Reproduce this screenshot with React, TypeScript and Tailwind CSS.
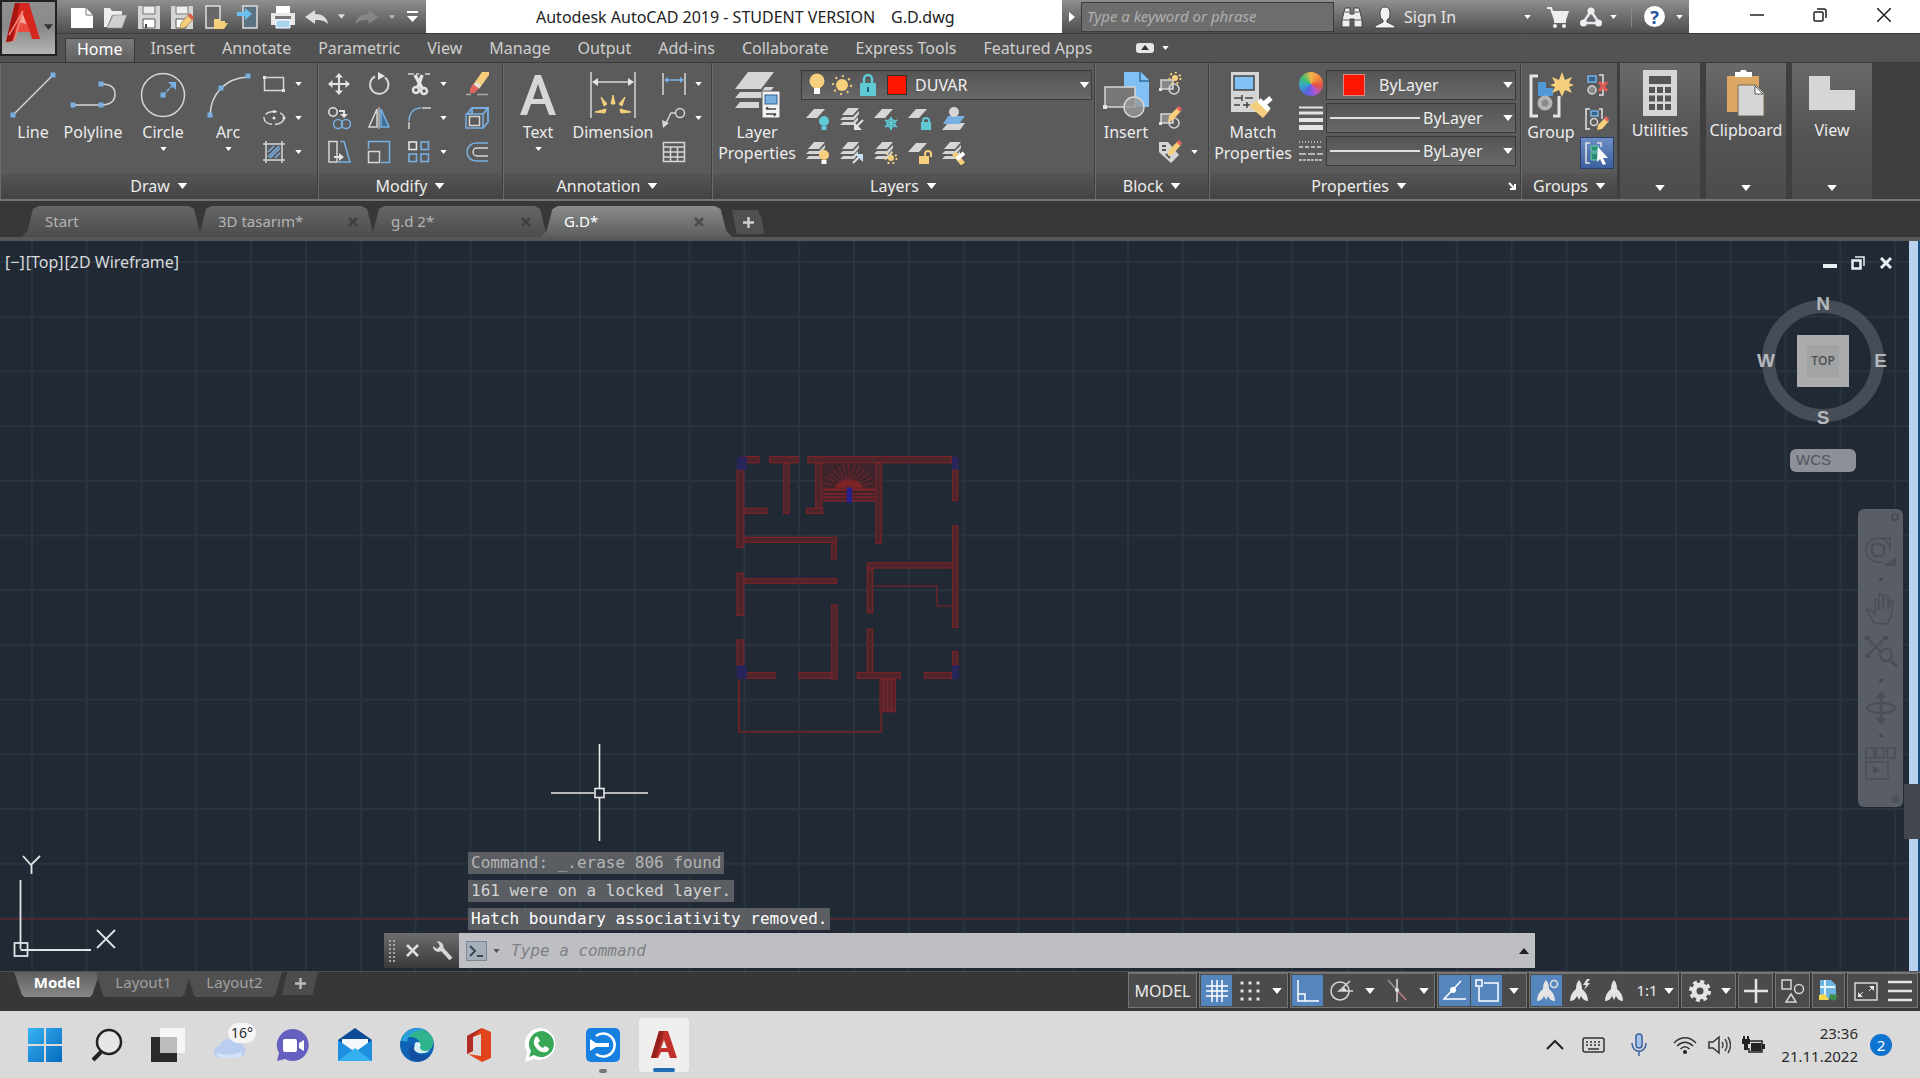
import React from "react";
import type { ReactNode } from "react";

const W = "#e4e4e4";
const B = "#78b0e2";
const G = "#d6d6d6";
const Y = "#f5cf7c";
const T = "#5fc9d6";
const N = "#4a4e55";

function Ic({ w = 24, h = 24, vb, children }: { w?: number; h?: number; vb?: string; children: ReactNode }) {
  return (
    <svg width={w} height={h} viewBox={vb ?? `0 0 ${w} ${h}`} fill="none" className="shrink-0" aria-hidden="true">
      {children}
    </svg>
  );
}

function Tri({ w = 8, h = 5, c = "#fff" }: { w?: number; h?: number; c?: string }) {
  return (
    <Ic w={w} h={h} vb="0 0 8 5">
      <path d="M0 0h8l-4 5z" fill={c} />
    </Ic>
  );
}

/* ---------- ribbon building blocks ---------- */

function Big({ icon, label, arrow, width }: { icon: ReactNode; label: string[]; arrow?: boolean; width: string }) {
  return (
    <button className={`flex ${width} shrink-0 flex-col items-center pt-2`}>
      <span className="mb-[3px] flex h-12 items-center justify-center">{icon}</span>
      {label.map((l) => (
        <span key={l} className="text-base leading-[21px] whitespace-nowrap">
          {l}
        </span>
      ))}
      {arrow && (
        <span className="mt-1">
          <Tri w={7} h={4} />
        </span>
      )}
    </button>
  );
}

function Small({ icon, name, arrow, wide }: { icon: ReactNode; name: string; arrow?: boolean; wide?: boolean }) {
  return (
    <span className={`flex h-[34px] items-center ${wide ? "w-[58px]" : ""}`}>
      <button aria-label={name} className="flex h-8 w-10 items-center justify-center">
        {icon}
      </button>
      {arrow && (
        <button aria-label={`${name} options`} className="flex h-8 w-2 items-center justify-center">
          <Tri w={7} h={4} />
        </button>
      )}
    </span>
  );
}

function Panel({ title, width, children, launcher }: { title: string; width: string; children: ReactNode; launcher?: boolean }) {
  return (
    <section className={`flex ${width} shrink-0 flex-col border-r border-l border-r-[#3f3f3f] border-l-[#6b6b6b] bg-[#5b5b5b]`}>
      <div className="flex h-[110px] items-start">{children}</div>
      <div className="flex flex-1 items-center justify-center bg-linear-to-b from-[#565656] to-[#434343]">
        <button className="ml-auto flex items-center gap-[7px] text-base leading-5">
          {title}
          <Tri w={11} h={6} />
        </button>
        <span className="ml-auto">
          {launcher && (
            <button aria-label="Properties dialog" className="mr-1 block">
              <Ic w={8} h={8}>
                <path d="M1 1l5 5M7 2v5H2" stroke="#fff" strokeWidth="2" />
              </Ic>
            </button>
          )}
        </span>
      </div>
    </section>
  );
}

function Closed({ icon, label }: { icon: ReactNode; label: string }) {
  return (
    <button className="mr-[6px] flex w-20 shrink-0 flex-col items-center bg-linear-to-b from-[#6a6a6a] via-[#555] to-[#4c4c4c] pt-[6px] text-base leading-[21px]">
      <span className="flex h-12 items-center">{icon}</span>
      <span className="mt-[3px]">{label}</span>
      <span className="mt-auto mb-2">
        <Tri w={10} h={6} />
      </span>
    </button>
  );
}

/* ---------- draw icons ---------- */

const Dot = ({ x, y }: { x: number; y: number }) => <rect x={x - 2.5} y={y - 2.5} width="5" height="5" fill={B} />;

const LineIcon = (
  <Ic w={46} h={46}>
    <path d="M3 43L43 3" stroke={G} strokeWidth="1.5" />
    <Dot x={3} y={43} />
    <Dot x={43} y={3} />
  </Ic>
);
const PolylineIcon = (
  <Ic w={46} h={46}>
    <path d="M3 33h28c9 0 14-4 14-11S40 12 31 12" stroke={G} strokeWidth="1.5" />
    <Dot x={3} y={33} />
    <Dot x={31} y={33} />
    <Dot x={31} y={12} />
  </Ic>
);
const CircleIcon = (
  <Ic w={46} h={46}>
    <circle cx="23" cy="23" r="21.5" stroke={G} strokeWidth="1.5" />
    <path d="M23 23l10-10" stroke={B} strokeWidth="1.5" strokeDasharray="4 1" />
    <path d="M28 10h8v8z" fill={B} />
    <Dot x={23} y={23} />
  </Ic>
);
const ArcIcon = (
  <Ic w={46} h={46}>
    <path d="M5 43C6 22 20 6 43 5" stroke={G} strokeWidth="1.5" />
    <Dot x={5} y={43} />
    <Dot x={16} y={16} />
    <Dot x={43} y={4} />
  </Ic>
);
const RectIcon = (
  <Ic>
    <rect x="2.5" y="5.5" width="19" height="13" stroke={G} strokeWidth="1.5" />
    <path d="M1 4h3v3H1zM20 17h3v3h-3z" fill={W} />
  </Ic>
);
const EllipseIcon = (
  <Ic>
    <ellipse cx="12" cy="12" rx="10" ry="6.5" stroke={G} strokeWidth="1.5" strokeDasharray="12 3" />
    <circle cx="12" cy="12" r="1.5" fill={W} />
    <circle cx="22" cy="12" r="1.5" fill={W} />
    <circle cx="12" cy="5.5" r="1.5" fill={W} />
  </Ic>
);
const HatchIcon = (
  <Ic>
    <path d="M4 1v22M20 1v22M1 4h22M1 20h22" stroke={G} strokeWidth="1.5" />
    <path d="M6 12l6-6M6 17L17 6M8 18l10-10M13 18l5-5" stroke={B} strokeWidth="1.5" />
  </Ic>
);

/* ---------- modify icons ---------- */

const MoveIcon = (
  <Ic>
    <path d="M12 1l4 4.500h-3V11h5.500V8L23 12l-4.500 4v-3H13v5.500h3L12 23l-4-4.500h3V13H5.500v3L1 12l4.500-4v3H11V5.500H8z" fill={W} />
  </Ic>
);
const RotateIcon = (
  <Ic>
    <path d="M8 4.500A9.200 9.200 0 1 0 18 5.500" stroke={G} strokeWidth="2" />
    <path d="M11 0l7 4-7 4z" fill={W} />
  </Ic>
);
const TrimIcon = (
  <Ic>
    <path d="M1 2h6M9 2h3M18 2h5" stroke={G} strokeWidth="1.5" />
    <path d="M8 3l7 13M15 3l-4 12" stroke={W} strokeWidth="3.5" />
    <circle cx="9" cy="18" r="3" stroke={W} strokeWidth="2.5" />
    <circle cx="17" cy="19" r="3" stroke={W} strokeWidth="2.5" />
  </Ic>
);
const EraseIcon = (
  <Ic>
    <path d="M1 22.500h5M12 22.500h11" stroke="#aaa" strokeWidth="1.5" />
    <path d="M17 0h7v3L14 17l-6-4z" fill={Y} />
    <path d="M11 10l5 3-2 3-5-3z" fill={W} />
    <path d="M8 12l6 4.500L9 21H5v-4z" fill="#e26660" />
  </Ic>
);
const CopyIcon = (
  <Ic>
    <circle cx="6" cy="6" r="4.2" stroke={W} strokeWidth="1.5" />
    <path d="M12 5h5v4" stroke={W} strokeWidth="2" />
    <path d="M13 8h8l-4 4z" fill={W} />
    <circle cx="11" cy="18" r="4.5" stroke={B} strokeWidth="1.5" />
    <circle cx="19" cy="18" r="4.5" stroke={B} strokeWidth="1.5" />
  </Ic>
);
const MirrorIcon = (
  <Ic>
    <path d="M10 3v18H2z" stroke={G} strokeWidth="1.5" />
    <path d="M14 3v18h8z" fill="#3f6f9b" stroke={B} strokeWidth="1.5" />
    <path d="M12 1v22" stroke={W} />
  </Ic>
);
const FilletIcon = (
  <Ic>
    <path d="M2 23v-7" stroke={G} strokeWidth="1.5" />
    <path d="M2 15C2 7 7 2 14 2" stroke={B} strokeWidth="1.5" />
    <path d="M15 2h9" stroke={G} strokeWidth="1.5" />
  </Ic>
);
const ExplodeIcon = (
  <Ic>
    <path d="M2 8l5-6h16l-5 6M23 2v14l-5 6M7 2v6M3 8h3" stroke={B} strokeWidth="1.8" />
    <path d="M1 8h17v14H1z" stroke={B} strokeWidth="1.5" />
    <rect x="4.500" y="10.500" width="10" height="9" stroke={G} strokeWidth="1.5" />
  </Ic>
);
const StretchIcon = (
  <Ic>
    <path d="M2 1.500h8V22H2z" stroke={G} strokeWidth="1.5" />
    <path d="M13 1.500h4L23 22H11" stroke={B} strokeWidth="1.5" />
    <path d="M7 17h6" stroke={W} strokeWidth="2" />
    <path d="M12 13l5 4-5 4z" fill={W} />
  </Ic>
);
const ScaleIcon = (
  <Ic>
    <path d="M1.500 9V1.500h21v21H14" stroke={B} strokeWidth="1.5" />
    <rect x="1.500" y="11.500" width="11" height="11" stroke={G} strokeWidth="1.5" />
  </Ic>
);
const ArrayIcon = (
  <Ic>
    <rect x="2" y="2" width="7.500" height="7.500" stroke={W} strokeWidth="1.6" />
    <rect x="14" y="2" width="7.500" height="7.500" stroke={B} strokeWidth="1.6" />
    <rect x="2" y="14" width="7.500" height="7.500" stroke={B} strokeWidth="1.6" />
    <rect x="14" y="14" width="7.500" height="7.500" stroke={B} strokeWidth="1.6" />
  </Ic>
);
const OffsetIcon = (
  <Ic>
    <path d="M23 3H11a9 9 0 0 0 0 18h12" stroke={B} strokeWidth="1.5" />
    <path d="M23 8H12a4 4 0 0 0 0 8h11" stroke={G} strokeWidth="1.5" />
  </Ic>
);

/* ---------- annotation icons ---------- */

const TextIcon = (
  <Ic w={38} h={44}>
    <path d="M1 42L16 2h6l15 40h-7l-4-11H12L8 42zM14 26h10L19 11z" fill={G} />
  </Ic>
);
const DimensionIcon = (
  <Ic w={46} h={46}>
    <path d="M1 0v46M45 0v46M3 10h40" stroke={G} strokeWidth="1.5" />
    <path d="M2 10l6-4v8zM44 10l-6-4v8z" fill={W} />
    <path d="M21 32l2-9 2 9zM14 34l-3-9 6 7zM32 34l3-9-6 7zM16 37L5 40l10 1zM30 37l11 3-10 1z" fill={Y} stroke={Y} />
  </Ic>
);
const LinearIcon = (
  <Ic>
    <path d="M1 1v22M23 1v22" stroke={G} strokeWidth="1.5" />
    <path d="M3 8h18" stroke={B} strokeWidth="1.5" />
    <path d="M2 8l4-3v6zM22 8l-4-3v6z" fill={B} />
  </Ic>
);
const LeaderIcon = (
  <Ic>
    <circle cx="18" cy="7" r="4.5" stroke={G} strokeWidth="1.5" />
    <path d="M13 7H9L3 19" stroke={G} strokeWidth="1.5" />
    <path d="M0 14l7 3-6 5z" fill={G} />
  </Ic>
);
const TableIcon = (
  <Ic>
    <path d="M1.500 2.500h21v19h-21zM1.500 7h21M1.500 12h21M1.500 17h21M8.500 7v14M15.500 7v14" stroke={G} strokeWidth="1.5" />
  </Ic>
);

/* ---------- layer icons ---------- */

const LayerPropsIcon = (
  <Ic w={46} h={46}>
    <path d="M14 0h26L27 17H1z" fill={G} />
    <path d="M6 20h21l4-5h9l-9 11H1zM6 30h19v6H1z" fill={G} />
    <rect x="28" y="19" width="18" height="27" fill="#f3f3f3" stroke="#555" />
    <rect x="31" y="23" width="12" height="9" fill={B} stroke="#315e8c" />
    <path d="M32 37h10M32 37l2-2M42 42H32M42 42l-2 2" stroke="#444" strokeWidth="1.5" />
  </Ic>
);
const Sheet = <path d="M8 2h11l-8 9H0z" fill={G} />;
const Sheets = (
  <g fill={G}>
    <path d="M8 1h11l-6 7H2z" />
    <path d="M3 10h10l6-6v3l-5 6H0zM3 15h10l5-5v3l-4 5H0z" />
  </g>
);
const Bulb = ({ c }: { c: string }) => (
  <g>
    <circle cx="18" cy="14" r="5" fill={c} />
    <path d="M15.500 19h5v4h-5z" fill={c === Y ? "#fff" : c} />
  </g>
);
const Sun = ({ x, y, r }: { x: number; y: number; r: number }) => (
  <g>
    <circle cx={x} cy={y} r={r} fill={Y} />
    <circle cx={x} cy={y} r={r + 2.5} stroke={Y} strokeWidth="2" strokeDasharray="2 3" />
  </g>
);
const layerIcons: [string, ReactNode][] = [
  ["Layer off", <Ic>{Sheet}<Bulb c={T} /></Ic>],
  ["Isolate", <Ic>{Sheets}<path d="M23 13l-6 6" stroke={W} strokeWidth="2" /><path d="M14 15v8h8z" fill={W} /></Ic>],
  ["Freeze", <Ic>{Sheet}<path d="M17 10v13M11 13l12 7M23 13l-12 7" stroke={T} strokeWidth="2" /><circle cx="17" cy="16.500" r="4" stroke={T} strokeWidth="1.5" /></Ic>],
  ["Lock", <Ic>{Sheet}<path d="M15 16v-2a3 3 0 0 1 6 0v2" stroke={T} strokeWidth="2" /><path d="M13 15h10v8H13z" fill={T} /></Ic>],
  ["Make current", <Ic><path d="M6 16h17l-5 7H0z" fill={G} /><path d="M6 9h17l-6 8H1z" fill={B} /><circle cx="12" cy="5" r="5" fill={G} /></Ic>],
  ["Turn all layers on", <Ic>{Sheets}<Bulb c={Y} /></Ic>],
  ["Unisolate", <Ic>{Sheets}<path d="M13 22l7-7" stroke={W} strokeWidth="2" /><path d="M15 13h8v8z" fill="#c9e2f8" /></Ic>],
  ["Thaw all", <Ic>{Sheets}<Sun x={17} y={17} r={3} /></Ic>],
  ["Unlock", <Ic>{Sheet}<path d="M17 15v-2a3 3 0 0 1 6 0v3" stroke={Y} strokeWidth="2" /><path d="M11 15h10v8H11z" fill={Y} /></Ic>],
  ["Match layer", <Ic>{Sheets}<path d="M12 12l9 11" stroke={Y} strokeWidth="5" /><path d="M15 18l7-6" stroke="#fff" strokeWidth="4" /></Ic>],
];

/* ---------- block, properties and group icons ---------- */

const InsertIcon = (
  <Ic w={46} h={46}>
    <path d="M21 0h17l8 8v27H21z" fill="#80c0f4" />
    <path d="M37 0v9h9" stroke="#356998" strokeWidth="1.5" />
    <rect x="2" y="15" width="30" height="20" fill="#777" stroke={G} strokeWidth="1.5" />
    <circle cx="31" cy="35" r="10" fill="#999" fillOpacity=".8" stroke={G} strokeWidth="1.5" />
    <path d="M0 33h4v4H0z" fill={W} />
  </Ic>
);
const blockBase = (
  <g>
    <rect x="3" y="8" width="12" height="9" fill="#888" stroke={G} strokeWidth="1.5" />
    <circle cx="16" cy="17" r="5" stroke={G} strokeWidth="1.5" />
    <path d="M1 16h3v3H1z" fill={W} />
  </g>
);
const Pencil = (
  <g>
    <path d="M19 2l4 3-8 9-5 2 1-6z" fill={Y} />
    <path d="M18 2l3-2 3 3-2 3z" fill="#e26660" />
  </g>
);
const CreateBlockIcon = <Ic>{blockBase}<Sun x={17} y={6} r={3} /></Ic>;
const EditBlockIcon = <Ic>{blockBase}{Pencil}</Ic>;
const AttrIcon = (
  <Ic>
    <path d="M1 2h9l11 13-8 8L1 12z" fill={G} />
    <path d="M4 6h4M4 10h4M8 14l4 4" stroke="#555" strokeWidth="2" />
    {Pencil}
  </Ic>
);
const MatchIcon = (
  <Ic w={46} h={46}>
    <rect x="1" y="0" width="28" height="40" fill={G} />
    <rect x="4" y="4" width="20" height="14" fill="#80c0f4" stroke="#444" strokeWidth="1.5" />
    <path d="M4 26h8M15 26h8M12 23v6M4 33h6M13 33h7M17 30v6" stroke="#444" strokeWidth="1.5" />
    <path d="M19 34l11-7 10 11-7 8z" fill={Y} />
    <path d="M29 28l10 10M34 32l7-6" stroke="#fff" strokeWidth="5" />
  </Ic>
);
const GroupIcon = (
  <Ic w={46} h={46}>
    <path d="M10 4H3v40h7M25 44h6V24" stroke={W} strokeWidth="3" />
    <path d="M10 10h8v6h7v8H10z" fill="#4f9ad6" />
    <circle cx="17" cy="31" r="7.5" fill="#b4b4b4" />
    <circle cx="17" cy="31" r="3.5" fill="#8a8a8a" />
    <path d="M34 0l3 8 7-3-3 6 5 2-5 2 3 6-7-3-3 7-3-7-7 3 3-6-5-2 5-2-3-6 7 3z" fill={Y} />
  </Ic>
);
const UngroupIcon = (
  <Ic>
    <rect x="3" y="3" width="8" height="6" fill="#36658c" stroke={B} strokeWidth="1.5" />
    <circle cx="7" cy="17" r="4" fill="#888" stroke={G} strokeWidth="1.5" />
    <path d="M14 2h4v20h-4" stroke={W} strokeWidth="1.5" />
    <path d="M14 9l8 9M22 9l-8 9" stroke="#e25a52" strokeWidth="3" />
  </Ic>
);
const GroupEditIcon = (
  <Ic>
    <path d="M5 2H1v20h4M14 2h3v10" stroke={W} strokeWidth="1.5" />
    <rect x="6" y="4" width="7" height="5" fill="#36658c" stroke={B} strokeWidth="1.5" />
    <circle cx="9" cy="15" r="3.5" stroke={G} strokeWidth="1.5" />
    <path d="M20 11l4 3-7 8-5 1 1-5z" fill={Y} />
    <path d="M19 11l2-2 3 3-2 3z" fill="#e26660" />
  </Ic>
);
const GroupSelIcon = (
  <Ic>
    <path d="M5 2H1v20h4M12 2h4v4" stroke={W} strokeWidth="1.5" />
    <path d="M6 5h7v5H6zM6 12h7v7H6z" fill="#2d8a76" stroke="#6fd0a4" />
    <path d="M13 6l10 11h-5l3 6-3 1-3-6-3 3z" fill="#fff" />
  </Ic>
);

const CalcIcon = (
  <Ic w={34} h={46}>
    <rect width="34" height="46" fill={G} />
    <rect x="6" y="6" width="22" height="8" fill="#555" />
    {[17, 25.5, 34].map((y) => [6, 14, 22].map((x) => <rect key={`${x}-${y}`} x={x} y={y} width="6" height="6" fill="#555" />))}
  </Ic>
);
const ClipIcon = (
  <Ic w={38} h={46}>
    <path d="M0 6h32v36H0z" fill="#dda865" />
    <path d="M8 2h5l2-3h3l2 3h5v5H8z" fill="#fff" />
    <path d="M11 15h18l8 8v23H11z" fill={G} stroke="#7b6b52" />
    <path d="M28 16v8h8z" fill="#fff" stroke="#555" />
  </Ic>
);
const ViewIcon = (
  <Ic w={46} h={46}>
    <path d="M0 6h21v14h25v20H0z" fill={G} />
  </Ic>
);

/* ---------- title bar icons ---------- */

const qat: [string, ReactNode][] = [
  ["New", <Ic><path d="M1 3h15l7 7v13H1z" fill="#fff" /><path d="M16 3v7h7" stroke="#777" /></Ic>],
  ["Open", <Ic><path d="M1 22V3h6l2 3h10v4H9L4 22z" fill="#eee" /><path d="M10 10h14l-5 13H4z" fill="#cfcfcf" stroke="#888" strokeWidth=".6" /></Ic>],
  ["Save", <Ic><path d="M1 1h22v23H1z" fill="#d5d5d5" /><path d="M6 1h12v8H6z" fill="#eee" stroke="#777" /><path d="M6 14h12v9H6z" fill="#fff" stroke="#555" /><path d="M8 19h2v4H8z" fill="#444" /></Ic>],
  ["Save As", <Ic><path d="M1 1h22v23H1z" fill="#d5d5d5" /><path d="M6 1h12v8H6z" fill="#eee" stroke="#777" /><path d="M6 14h10v9H6z" fill="#fff" stroke="#555" /><path d="M19 9l5 4-8 9-6 2 1-6z" fill={Y} stroke="#7c6430" strokeWidth=".6" /><path d="M20 8l4 4-2 3-4-4z" fill="#d65a4c" /></Ic>],
  ["Open from mobile", <Ic><path d="M2 1h14v22H2z" fill="#686868" stroke="#ddd" strokeWidth="1.5" /><path d="M10 14h5l1 2h5v2l3 0-4 6H10z" fill={Y} /></Ic>],
  ["Save to mobile", <Ic><path d="M6 1h14v22H6z" fill="#5c7482" stroke="#ddd" strokeWidth="1.5" /><path d="M0 7h8V3l7 6-7 6v-4H0z" fill="#6cc0ef" /></Ic>],
  ["Plot", <Ic><path d="M5 1h14v7H5z" fill="#fff" /><path d="M0 8h24v12H0z" fill="#e8e8e8" /><path d="M4 11h16v3H4z" fill="#777" /><path d="M5 15h14v8H5z" fill="#a8d4ee" stroke="#fff" /></Ic>],
];

const UndoIcon = (c: string) => (
  <Ic>
    <path d="M0 12l10-7v4c7 0 12 3 13 10-4-4-8-4-13-4v4z" fill={c} />
  </Ic>
);

const Logo = (
  <Ic w={34} h={40} vb="0 0 34 40">
    <path d="M9 1h14l11 36h-8l-2-7H10l-3 9-7 1z" fill="#d6271f" />
    <path d="M9 1h5L6 39l-6 1z" fill="#a8140f" />
    <path d="M16 10l5 13h-9z" fill="#f6a79c" />
    <path d="M12 20l9 2 3 8H9z" fill="#ec4c40" />
    <path d="M3 33L17 9 8 39" stroke="#f28377" strokeWidth="1.5" />
  </Ic>
);

const tabs = ["Insert", "Annotate", "Parametric", "View", "Manage", "Output", "Add-ins", "Collaborate", "Express Tools", "Featured Apps"];

function Header() {
  return (
    <header className="grid shrink-0 grid-cols-[57px_1fr] grid-rows-[33px_29px] bg-[#535353]">
      <button
        aria-label="Application menu"
        className="row-span-2 mb-[6px] flex items-start gap-1 border-2 border-[#222] bg-linear-to-b from-[#8f8f8f] via-[#8a8a8a] to-[#b6b6b6] pl-1"
      >
        {Logo}
        <span className="mt-[22px]">
          <Tri w={9} h={6} c="#333" />
        </span>
      </button>
      <div className="flex min-w-0">
        <div className="flex w-[369px] shrink-0 items-center bg-linear-to-b from-[#8f8f8f] to-[#4f4f4f] pl-2">
          {qat.map(([n, icon]) => (
            <button key={n} aria-label={n} className="flex w-[34px] justify-center">
              {icon}
            </button>
          ))}
          <button aria-label="Undo" className="flex w-9 justify-center">{UndoIcon("#ddd")}</button>
          <button aria-label="Undo list" className="flex w-3 justify-center"><Tri w={7} h={5} c="#ddd" /></button>
          <button aria-label="Redo" className="flex w-10 -scale-x-100 justify-center">{UndoIcon("#868686")}</button>
          <button aria-label="Redo list" className="flex w-3 justify-center"><Tri w={6} h={4} c="#bbb" /></button>
          <button aria-label="Customize toolbar" className="flex w-7 justify-center">
            <Ic w={11} h={11}>
              <path d="M0 1h11" stroke="#fff" strokeWidth="2" />
              <path d="M0 5h11l-5.500 6z" fill="#fff" />
            </Ic>
          </button>
        </div>
        <h1 className="flex min-w-0 flex-1 items-center gap-4 bg-white pl-[110px] text-base whitespace-pre text-[#222]">
          <span>Autodesk AutoCAD 2019 - STUDENT VERSION</span>
          <span>G.D.dwg</span>
        </h1>
        <div className="flex w-[627px] shrink-0 items-center bg-linear-to-b from-[#8f8f8f] to-[#4f4f4f] text-[#e6e6e6]">
          <button aria-label="Collapse search" className="flex w-[19px] justify-center">
            <Ic w={6} h={10}>
              <path d="M0 0l6 5-6 5z" fill="#fff" />
            </Ic>
          </button>
          <input
            aria-label="Search"
            placeholder="Type a keyword or phrase"
            className="h-[30px] w-[253px] border border-[#3b3b3b] bg-[#6d6d6d] px-[5px] pb-[2px] text-[15px] italic placeholder:text-[#b0b0b0]"
          />
          <button aria-label="Find" className="flex w-[36px] justify-center">
            <Ic w={22} h={22}>
              <path d="M4 2h5v6h4V2h5l3 12v7h-8v-8H9v8H1v-7z" fill="#eee" stroke="#444" />
              <path d="M4 6h4M14 6h4M1 14h8M13 14h8" stroke="#555" />
            </Ic>
          </button>
          <button className="flex items-center gap-2 pl-1 text-base">
            <Ic w={22} h={24}>
              <path d="M11 2c4 0 5 3 5 7 0 3-1 5-3 6v2l8 4v2H1v-2l8-4v-2c-2-1-3-3-3-6 0-4 1-7 5-7z" fill="#f2f2f2" stroke="#444" />
            </Ic>
            Sign In
          </button>
          <span className="ml-auto flex items-center">
            <button aria-label="Account menu" className="flex w-5 justify-center"><Tri w={7} h={4} /></button>
            <button aria-label="Store" className="flex w-[42px] justify-center">
              <Ic w={22} h={22}>
                <path d="M0 2h4l4 12h11" stroke="#eee" strokeWidth="2" />
                <path d="M4 5h18l-3 9H8z" fill="#eee" />
                <path d="M7 16h12" stroke="#eee" strokeWidth="2" />
                <circle cx="8" cy="20" r="2" fill="#eee" />
                <circle cx="17" cy="20" r="2" fill="#eee" />
              </Ic>
            </button>
            <button aria-label="Share" className="flex w-6 justify-center">
              <Ic w={22} h={20}>
                <path d="M11 4l8 12H3z" stroke="#e6e6f0" strokeWidth="2.5" />
                <circle cx="11" cy="4" r="3.5" fill="#eee" />
                <circle cx="3.500" cy="16" r="3.5" fill="#eee" />
                <circle cx="18.500" cy="16" r="3.5" fill="#eee" />
              </Ic>
            </button>
            <button aria-label="Share options" className="flex w-5 justify-center"><Tri w={7} h={4} /></button>
            <span className="mx-2 h-5 w-px bg-[#888]" />
            <button aria-label="Help" className="mx-1 flex h-[21px] w-[21px] items-center justify-center rounded-full bg-white text-lg leading-5 font-bold text-[#2553a0]">
              ?
            </button>
            <button aria-label="Help options" className="flex w-5 justify-center"><Tri w={7} h={4} /></button>
          </span>
        </div>
        <div className="flex w-[231px] shrink-0 items-center justify-around bg-white pr-1 pb-1 pl-9">
          <button aria-label="Minimize">
            <Ic w={14} h={14}><path d="M0 7h14" stroke="#222" strokeWidth="1.5" /></Ic>
          </button>
          <button aria-label="Restore">
            <Ic w={14} h={14}>
              <rect x="1" y="4" width="9" height="9" rx="1" stroke="#222" strokeWidth="1.5" />
              <path d="M4 1h7q2 0 2 2v7" stroke="#222" strokeWidth="1.5" />
            </Ic>
          </button>
          <button aria-label="Close">
            <Ic w={14} h={14}><path d="M0 0l14 14M14 0L0 14" stroke="#222" strokeWidth="1.5" /></Ic>
          </button>
        </div>
      </div>
      <nav className="flex border-t border-[#3c3c3c] pl-2 text-base text-[#cfcfcf]">
        <button className="mt-1 mr-[3px] flex items-center border border-b-0 border-[#383838] bg-linear-to-b from-[#7a7a7a] to-[#606060] px-[11px] pb-1 text-white">
          Home
        </button>
        {tabs.map((t) => (
          <button key={t} className="pr-[14px] pl-[13px] whitespace-nowrap">
            {t}
          </button>
        ))}
        <button aria-label="Minimize ribbon" className="ml-[30px] flex items-center gap-2">
          <Ic w={18} h={10}>
            <rect width="18" height="10" rx="3" fill="#e6e6e6" />
            <path d="M5 7h8L9 2z" fill="#333" />
          </Ic>
          <Tri w={7} h={4} />
        </button>
      </nav>
    </header>
  );
}

function Ribbon() {
  const combo = "h-[30px] w-full appearance-none border border-[#3a3a3a] bg-linear-to-b from-[#555] to-[#686868] text-base text-[#eee]";
  return (
    <div className="flex h-[139px] shrink-0 border-t border-b-2 border-t-[#3a3a3a] border-b-[#757575] bg-[#3f3f3f] text-[#ececec]">
      <Panel title="Draw" width="w-[318px]">
        <Big width="w-16" icon={LineIcon} label={["Line"]} />
        <Big width="w-14" icon={PolylineIcon} label={["Polyline"]} />
        <Big width="w-[84px]" icon={CircleIcon} label={["Circle"]} arrow />
        <Big width="w-[46px]" icon={ArcIcon} label={["Arc"]} arrow />
        <div className="pt-1 pl-[3px]">
          <Small name="Rectangle" icon={RectIcon} arrow />
          <Small name="Ellipse" icon={EllipseIcon} arrow />
          <Small name="Hatch" icon={HatchIcon} arrow />
        </div>
      </Panel>
      <Panel title="Modify" width="w-[185px]">
        <div className="flex pt-1">
          <div>
            <Small name="Move" icon={MoveIcon} />
            <Small name="Copy" icon={CopyIcon} />
            <Small name="Stretch" icon={StretchIcon} />
          </div>
          <div>
            <Small name="Rotate" icon={RotateIcon} />
            <Small name="Mirror" icon={MirrorIcon} />
            <Small name="Scale" icon={ScaleIcon} />
          </div>
          <div>
            <Small name="Trim" icon={TrimIcon} arrow wide />
            <Small name="Fillet" icon={FilletIcon} arrow wide />
            <Small name="Array" icon={ArrayIcon} arrow wide />
          </div>
          <div>
            <Small name="Erase" icon={EraseIcon} />
            <Small name="Explode" icon={ExplodeIcon} />
            <Small name="Offset" icon={OffsetIcon} />
          </div>
        </div>
      </Panel>
      <Panel title="Annotation" width="w-[209px]">
        <Big width="w-[68px]" icon={TextIcon} label={["Text"]} arrow />
        <Big width="w-[82px]" icon={DimensionIcon} label={["Dimension"]} />
        <div className="pt-1">
          <Small name="Linear" icon={LinearIcon} arrow />
          <Small name="Leader" icon={LeaderIcon} arrow />
          <Small name="Table" icon={TableIcon} />
        </div>
      </Panel>
      <Panel title="Layers" width="w-[383px]">
        <Big width="w-[88px]" icon={LayerPropsIcon} label={["Layer", "Properties"]} />
        <div className="flex-1 pt-[7px] pr-[2px]">
          <div className="relative">
            <select aria-label="Layer" className={`${combo} pl-[113px]`} defaultValue="DUVAR">
              <option>DUVAR</option>
            </select>
            <span className="pointer-events-none absolute inset-y-0 left-2 flex items-center gap-[6px]">
              <Ic w={16} h={24}>
                <circle cx="8" cy="8" r="7.5" fill={Y} />
                <path d="M5 15h6v6H5z" fill="#fff" />
              </Ic>
              <Ic w={22} h={24}>
                <circle cx="11" cy="12" r="6" fill={Y} />
                <circle cx="11" cy="12" r="9" stroke={Y} strokeWidth="2" strokeDasharray="2 5" />
              </Ic>
              <Ic w={18} h={24}>
                <path d="M5 11V6a4 4 0 0 1 8 0v5" stroke={T} strokeWidth="2.5" />
                <rect x="1" y="10" width="16" height="13" fill={T} />
                <path d="M9 14v5" stroke="#24626b" strokeWidth="2" />
              </Ic>
              <span className="ml-1 h-5 w-5 border border-[#333] bg-[#fe1600]" />
            </span>
            <span className="pointer-events-none absolute inset-y-0 right-[2px] flex items-center">
              <Tri w={11} h={6} />
            </span>
          </div>
          <div className="grid w-[170px] grid-cols-5 pt-[2px]">
            {layerIcons.map(([n, icon]) => (
              <button key={n} aria-label={n} className="flex h-[34px] items-center justify-center">
                {icon}
              </button>
            ))}
          </div>
        </div>
      </Panel>
      <Panel title="Block" width="w-[114px]">
        <Big width="w-[60px]" icon={InsertIcon} label={["Insert"]} />
        <div className="-ml-[6px] pt-1">
          <Small name="Create block" icon={CreateBlockIcon} />
          <Small name="Edit block" icon={EditBlockIcon} />
          <Small name="Edit attributes" icon={AttrIcon} arrow />
        </div>
      </Panel>
      <Panel title="Properties" width="w-[312px]" launcher>
        <Big width="w-[86px]" icon={MatchIcon} label={["Match", "Properties"]} />
        <div className="flex w-[30px] flex-col items-center gap-[10px] pt-[9px]">
          <span className="h-6 w-6 rounded-full bg-[conic-gradient(#f5b54a,#f08a3c,#e2524a,#a658d8,#5560e0,#35a5c8,#3fc06f,#f5b54a)]" />
          <Ic w={24} h={24}>
            <path d="M0 1.500h24" stroke={W} strokeWidth="2" />
            <path d="M0 7h24" stroke={W} strokeWidth="3" />
            <path d="M0 14h24" stroke={W} strokeWidth="4" />
            <path d="M0 21.500h24" stroke={W} strokeWidth="5" />
          </Ic>
          <Ic w={24} h={22}>
            <path d="M0 2h24" stroke={G} strokeWidth="1.5" strokeDasharray="1 2" />
            <path d="M0 7h24" stroke={G} strokeWidth="1.5" strokeDasharray="4 2" />
            <path d="M0 14h24" stroke={G} strokeWidth="1.5" strokeDasharray="7 2" />
            <path d="M0 20h24" stroke={G} strokeWidth="1.5" strokeDasharray="3 1" />
          </Ic>
        </div>
        <div className="flex flex-1 flex-col gap-[3px] pt-[7px] pr-1">
          {["Object color", "Lineweight", "Linetype"].map((n, i) => (
            <div key={n} className="relative">
              <select aria-label={n} className={`${combo} ${i === 0 ? "pl-[52px]" : "pl-[96px]"}`} defaultValue="ByLayer">
                <option>ByLayer</option>
              </select>
              <span className="pointer-events-none absolute inset-y-0 left-1 flex items-center">
                {i === 0 ? <span className="ml-[13px] h-[22px] w-[22px] border border-[#d88] bg-[#fe1600]" /> : <span className="h-[2px] w-[90px] bg-[#e0e0e0]" />}
              </span>
              <span className="pointer-events-none absolute inset-y-0 right-[3px] flex items-center">
                <Tri w={10} h={6} />
              </span>
            </div>
          ))}
        </div>
      </Panel>
      <Panel title="Groups" width="w-[97px]">
        <Big width="w-[58px]" icon={GroupIcon} label={["Group"]} />
        <div className="flex w-[34px] flex-col gap-[2px] pt-[6px]">
          <button aria-label="Ungroup" className="flex h-8 items-center justify-center">{UngroupIcon}</button>
          <button aria-label="Group edit" className="flex h-8 items-center justify-center">{GroupEditIcon}</button>
          <button aria-label="Group selection" className="flex h-8 items-center justify-center border border-[#28406b] bg-linear-to-b from-[#6d8fc4] to-[#3c5f9e]">{GroupSelIcon}</button>
        </div>
      </Panel>
      <span className="w-[2px]" />
      <Closed icon={CalcIcon} label="Utilities" />
      <Closed icon={ClipIcon} label="Clipboard" />
      <Closed icon={ViewIcon} label="View" />
    </div>
  );
}

function FileTabs() {
  const items = ["Start", "3D tasarım*", "g.d 2*", "G.D*"];
  return (
    <div className="flex h-10 shrink-0 items-end border-b-4 border-[#555857] bg-[#383838] pl-[22px] text-[15px]">
      {items.map((t, i) => {
        const on = i === 3;
        return (
          <div
            key={t}
            className={`-mr-[10px] flex h-[31px] shrink-0 items-center pl-[23px] [clip-path:polygon(0_100%,3%_80%,6%_10%,9%_0,91%_0,94%_10%,97%_80%,100%_100%)] ${
              on
                ? "z-10 w-[191px] bg-linear-to-b from-[#8b8b8b] to-[#5c5f5e] pr-7 text-white"
                : "w-[183px] bg-linear-to-b from-[#676767] to-[#4c4c4c] pr-5 text-[#b4b4b4]"
            }`}
          >
            <button className="flex-1 text-left">{t}</button>
            {i > 0 && (
              <button aria-label={`Close ${t}`}>
                <Ic w={10} h={10}>
                  <path d="M1 1l8 8M9 1L1 9" stroke={on ? "#4c4c4c" : "#404040"} strokeWidth="2.5" />
                </Ic>
              </button>
            )}
          </div>
        );
      })}
      <button
        aria-label="New drawing"
        className="mb-[3px] ml-[10px] flex h-6 w-8 items-center justify-center bg-[#505050] [clip-path:polygon(0_0,80%_0,92%_30%,100%_100%,15%_100%)]"
      >
        <Ic w={11} h={11}>
          <path d="M5.500 0v11M0 5.500h11" stroke="#ccc" strokeWidth="2.5" />
        </Ic>
      </button>
    </div>
  );
}

/* ---------- drawing area ---------- */

/* [x, y, width, height] of each wall, in thirds of a screen unit */
const walls = [
  [100, 80, 50, 18], [182, 80, 86, 18], [297, 80, 430, 18], [84, 120, 20, 232], [84, 430, 20, 126], [84, 630, 20, 76],
  [224, 100, 16, 150], [108, 235, 66, 15], [293, 235, 48, 15], [320, 100, 18, 134], [501, 100, 16, 240], [108, 322, 275, 15],
  [368, 339, 14, 47], [108, 446, 275, 14], [368, 525, 16, 222], [270, 728, 98, 17], [108, 728, 90, 17], [475, 398, 254, 16],
  [475, 416, 16, 132], [475, 598, 16, 130], [445, 728, 128, 17], [731, 288, 15, 304], [731, 120, 15, 92], [731, 665, 15, 40],
  [647, 728, 80, 17], [513, 748, 46, 97],
];
const columns = [[84, 80, 30, 40], [729, 80, 20, 38], [84, 706, 30, 40], [729, 706, 20, 40]];

function FloorPlan() {
  const rays = Array.from({ length: 15 }, (_, i) => (Math.PI * i) / 14);
  return (
    <g transform="translate(709 430) scale(.33333)">
      <rect x="340" y="100" width="160" height="114" fill="#3d242c" />
      <g fill="#4f252c" stroke="#742329" strokeWidth="4">
        {walls.map(([x, y, w, h]) => (
          <rect key={`${x}-${y}`} x={x} y={y} width={w} height={h} />
        ))}
      </g>
      <g stroke="#74242a" strokeWidth="3" fill="none">
        {rays.map((a) => (
          <path key={a} d={`M${420 + 26 * Math.cos(a)} ${175 - 26 * Math.sin(a)}L${420 + 78 * Math.cos(a)} ${175 - 75 * Math.sin(a)}`} />
        ))}
        <path d="M342 180h156M342 192h156M342 202h156M342 212h156M524 748v95M536 748v95M548 748v95" strokeWidth="6" />
        <path d="M380 175a40 26 0 0 1 80 0z" fill="#7d2424" />
        <path d="M494 468h190v60h44" strokeWidth="5" stroke="#66252c" />
        <path d="M90 748v157h427v-60" strokeWidth="6" stroke="#66252b" />
      </g>
      <g fill="#28255a">
        {columns.map(([x, y, w, h]) => (
          <rect key={`${x}-${y}`} x={x} y={y} width={w} height={h} />
        ))}
        <rect x="413" y="172" width="16" height="46" fill="#27208a" />
      </g>
    </g>
  );
}

const navIcons: (ReactNode | null)[] = [
  <Ic w={32} h={32}><path d="M25 14A12 12 0 1 0 13 26h5M25 14V2H13" stroke={N} strokeWidth="1.5" /><rect x="7" y="8" width="12" height="12" rx="4" stroke={N} strokeWidth="2" /><path d="M18 30l13-9v9z" fill={N} /></Ic>,
  null,
  <Ic w={32} h={34}><path d="M9 32l-7-13 3-1 5 5V8l3 1 1 10V3l4 1v14l1-14 4 1v14l2-10 3 1-2 15-4 8z" stroke={N} strokeWidth="1.5" /></Ic>,
  <Ic w={34} h={34}><path d="M2 2l16 16M22 2L2 22" stroke={N} strokeWidth="2" /><path d="M1 1h5v4H1zM19 1h5v4h-5zM1 19h5v4H1z" fill={N} /><circle cx="22" cy="20" r="6" stroke={N} strokeWidth="2" /><path d="M26 25l7 7" stroke={N} strokeWidth="3" /></Ic>,
  null,
  <Ic w={32} h={32}><path d="M16 1v30M12 6l4-5 4 5M12 26l4 5 4-5" stroke={N} strokeWidth="2.5" /><ellipse cx="16" cy="16" rx="14" ry="5" stroke={N} strokeWidth="2" /></Ic>,
  null,
  <Ic w={32} h={34}><path d="M1 1h8v10H1zM11 1h8v10h-8zM22 1h8v10h-8zM1 15h22v17H1z" stroke={N} strokeWidth="1.5" /><path d="M8 19v8l7-4z" fill={N} /></Ic>,
];

function Canvas() {
  const history = [
    ["Command: _.erase 806 found", "text-[#b4b4b4]"],
    ["161 were on a locked layer.", "text-[#d2d2d2]"],
    ["Hatch boundary associativity removed.", "text-white"],
  ];
  return (
    <main className="relative min-h-0 flex-1 overflow-hidden bg-[#212a34]">
      <svg className="absolute inset-0 h-full w-full" fill="none" aria-label="Floor plan drawing">
        <defs>
          <pattern id="grid" width="54.8" height="54.7" patternUnits="userSpaceOnUse" x="31" y="20">
            <path d="M0 1h54.800M1 0v54.700" stroke="#29343e" strokeWidth="2" />
          </pattern>
        </defs>
        <rect width="100%" height="100%" fill="url(#grid)" />
        <g transform="translate(0 -241)">
          <path d="M0 919h1909" stroke="#50262f" strokeWidth="2" />
          <FloorPlan />
          <g stroke="#e8e8e8" strokeWidth="1.6">
            <path d="M551 793h43M604 793h44M599.500 744v44M599.500 798v43" />
            <rect x="595" y="788.500" width="9" height="9" />
          </g>
          <g stroke="#dfe3e6" strokeWidth="1.8">
            <rect x="14.500" y="943" width="13" height="13" />
            <path d="M20.500 949V880M20.500 950H91M97 930l18 18M115 930l-18 18M23 856l8 9 9-9M31.500 865v9" />
          </g>
        </g>
      </svg>

      <div className="absolute top-[11px] left-[5px] flex gap-px text-base leading-5 text-[#d8dadc]">
        <button>[−]</button>
        <button>[Top]</button>
        <button>[2D Wireframe]</button>
      </div>

      <div className="absolute top-[15px] right-[27px] flex items-center gap-[14px]">
        <button aria-label="Minimize drawing"><Ic w={14} h={14}><path d="M0 10h14" stroke="#e8eef4" strokeWidth="4" /></Ic></button>
        <button aria-label="Restore drawing">
          <Ic w={14} h={14}>
            <rect x="1.500" y="4.500" width="8" height="8" stroke="#e8eef4" strokeWidth="2.5" />
            <path d="M4 1h9v9" stroke="#e8eef4" strokeWidth="1.5" />
          </Ic>
        </button>
        <button aria-label="Close drawing"><Ic w={14} h={14}><path d="M2 2l10 10M12 2L2 12" stroke="#e8eef4" strokeWidth="3" /></Ic></button>
      </div>

      <div className="absolute top-[49px] right-[24px] flex w-[146px] flex-col items-center">
        <div className="relative flex h-[142px] w-full items-center justify-center font-['Liberation_Sans'] text-[19px] leading-5 font-bold text-[#b4b8bc]">
          <span className="absolute h-[122px] w-[122px] rounded-full border-[13px] border-[#464d57]" />
          <button className="flex h-[52px] w-[52px] items-center justify-center bg-[#a9abad] p-[10px]">
            <span className="flex h-full w-full items-center justify-center bg-[#a1a3a5] font-['Open_Sans',sans-serif] text-xs font-semibold text-[#4c4e50]">TOP</span>
          </button>
          <span className="absolute top-[4px]">N</span>
          <span className="absolute bottom-[4px]">S</span>
          <span className="absolute left-[7px]">W</span>
          <span className="absolute right-[9px]">E</span>
        </div>
        <button className="mt-[17px] flex h-[23px] w-[66px] items-center rounded-md bg-[#8d9098] pl-[6px] font-['Liberation_Sans'] text-[15px] text-[#53575f]">
          WCS
        </button>
      </div>

      <div className="absolute top-[268px] right-[17px] flex h-[298px] w-[45px] flex-col items-center gap-[10px] rounded-md bg-[#585d66] pt-[27px]">
        {navIcons.map((n, i) =>
          n ? (
            <button key={i} aria-label={`Navigation tool ${i + 1}`}>
              {n}
            </button>
          ) : (
            <span key={i} className="h-[3px] w-1 rounded bg-[#43474e]" />
          ),
        )}
        <span className="absolute top-1 right-1 h-2 w-2 rounded-full border-2 border-[#474b52]" />
        <span className="absolute right-1 bottom-1 h-2 w-2 rounded-full bg-[#4d5158]" />
      </div>

      <div className="absolute inset-y-0 right-0 w-[11px] border-r-2 border-[#1c4e80] bg-[#b9d2ee]" />
      <div className="absolute top-[543px] right-0 h-[55px] w-4 bg-[#43464f]" />

      <div className="absolute right-[385px] bottom-[3px] left-[384px] font-['DejaVu_Sans_Mono',monospace] text-base">
        <div className="mb-[3px] ml-[84px] flex flex-col items-start gap-[6px]">
          {history.map(([t, c]) => (
            <p key={t} className={`bg-[#5a5d62] px-[3px] leading-[22px] whitespace-nowrap ${c}`}>
              {t}
            </p>
          ))}
        </div>
        <div className="flex h-[35px]">
          <div className="flex w-[75px] items-center gap-[10px] bg-linear-to-b from-[#6c6e70] to-[#37393b] pl-1">
            <span className="h-6 w-2 bg-[radial-gradient(#a5a5a5_1px,transparent_1px)] bg-size-[4px_4px]" />
            <button aria-label="Close command line">
              <Ic w={13} h={13}><path d="M1 1l11 11M12 1L1 12" stroke="#ddd" strokeWidth="2.5" /></Ic>
            </button>
            <button aria-label="Customize" className="pl-1">
              <Ic w={20} h={22}>
                <path d="M8 8l10 11" stroke="#d8d8d8" strokeWidth="4" />
                <path d="M4 1l3 5-3 3-4-3c0 5 5 7 9 5 3-3 2-9-5-10z" fill="#d8d8d8" />
              </Ic>
            </button>
          </div>
          <div className="flex flex-1 items-center bg-[#bebfc2] pr-[6px] pl-[7px]">
            <button aria-label="Recent commands" className="flex items-center gap-[6px]">
              <Ic w={21} h={20}>
                <rect x=".5" y=".5" width="20" height="19" fill="#a5afbc" stroke="#7c8796" />
                <path d="M4 5l5 5-5 5M11 15h6" stroke="#3a4654" strokeWidth="2" />
              </Ic>
              <Tri w={7} h={4} c="#555" />
            </button>
            <input aria-label="Command" placeholder="Type a command" className="min-w-0 flex-1 bg-transparent pl-[11px] italic placeholder:text-[#7e7f82]" />
            <button aria-label="Expand history">
              <Ic w={10} h={6}><path d="M0 6h10L5 0z" fill="#222" /></Ic>
            </button>
          </div>
        </div>
      </div>
    </main>
  );
}

/* ---------- status bar ---------- */

function Cell({ on, name, w = "w-[34px]", children }: { on?: boolean; name: string; w?: string; children: ReactNode }) {
  return (
    <button aria-label={name} className={`flex h-[31px] ${w} items-center justify-center ${on ? "bg-[#5585bd]" : ""}`}>
      {children}
    </button>
  );
}

function Group({ children }: { children: ReactNode }) {
  return <div className="flex items-center gap-[1px] border border-[#757575] bg-[#4b4b4b] px-[1px]">{children}</div>;
}

const Person = <path d="M11 1c2 2 3 5 3 9 4 3 6 7 6 12-3 0-6-2-7-5l-2 4-2-4c-1 3-4 5-7 5 0-5 2-9 6-12 0-4 1-7 3-9z" fill={W} />;

function StatusBar() {
  return (
    <footer className="flex h-10 shrink-0 items-start border-t border-[#4d5053] bg-[#373737]">
      <nav className="flex pl-[14px] text-[15px] leading-[21px] text-[#a0a0a0]">
        <button className="-mr-1 h-[25px] w-[86px] bg-linear-to-b from-[#606060] to-[#888] pb-1 font-bold text-white [clip-path:polygon(0_0,100%_0,91%_90%,88%_100%,12%_100%,9%_90%)]">Model</button>
        {["Layout1", "Layout2"].map((t) => (
          <button key={t} className="-mr-1 h-[25px] w-[95px] bg-[#505050] pb-1 [clip-path:polygon(0_0,100%_0,93%_90%,90%_100%,10%_100%,7%_90%)]">
            {t}
          </button>
        ))}
        <button aria-label="New layout" className="ml-1 flex h-[23px] w-9 items-center justify-center bg-[#4c4c4c] [clip-path:polygon(15%_0,100%_0,85%_100%,0_100%)]">
          <Ic w={11} h={11}><path d="M5.500 0v11M0 5.500h11" stroke="#bbb" strokeWidth="2.5" /></Ic>
        </button>
      </nav>
      <div className="ml-auto flex h-9 gap-[2px] border-t border-[#757575] pr-[2px] text-base text-[#ececec]">
        <Group><Cell name="Model space" w="w-[65px]">MODEL</Cell></Group>
        <Group>
          <Cell name="Grid" on w="w-[31px]"><Ic w={22} h={22}><path d="M6 0v22M11 0v22M16 0v22M0 6h22M0 11h22M0 16h22" stroke="#fff" strokeWidth="1.5" /></Ic></Cell>
          <Cell name="Snap"><Ic w={20} h={20}>{[2, 10, 18].map((y) => [2, 10, 18].map((x) => <rect key={`${x}-${y}`} x={x - 1.5} y={y - 1.5} width="3" height="3" fill={W} />))}</Ic></Cell>
          <Cell name="Snap options" w="w-[18px]"><Tri w={10} h={6} /></Cell>
        </Group>
        <Group>
          <Cell name="Ortho" on w="w-[31px]"><Ic><path d="M2 1v21h21M2 15h7v7" stroke="#fff" strokeWidth="1.5" /></Ic></Cell>
          <Cell name="Polar" w="w-[36px]"><Ic><circle cx="10" cy="12" r="9" stroke={G} strokeWidth="1.5" /><path d="M23 12H9L20 2" stroke={G} strokeWidth="1.5" /><path d="M14 8l3 4h-6z" fill={W} /></Ic></Cell>
          <Cell name="Polar options" w="w-[18px]"><Tri w={10} h={6} /></Cell>
          <Cell name="Isodraft"><Ic><path d="M12 0v23" stroke={G} strokeWidth="1.5" /><path d="M3 1l8 9" stroke="#999" strokeWidth="1.5" /><path d="M13 12l8 9" stroke="#c07a7a" strokeWidth="1.5" /><circle cx="12" cy="11" r="2" fill={W} /></Ic></Cell>
          <Cell name="Isodraft options" w="w-[18px]"><Tri w={10} h={6} /></Cell>
        </Group>
        <Group>
          <Cell name="Tracking" on w="w-[31px]"><Ic><path d="M23 20H1L18 2" stroke="#fff" strokeWidth="1.5" /><circle cx="10" cy="11" r="3" fill="#fff" /></Ic></Cell>
          <Cell name="Object snap" on w="w-[31px]"><Ic><path d="M4 8v14h19V4H9" stroke="#fff" strokeWidth="1.5" /><rect x="1" y="1" width="6" height="6" stroke="#fff" strokeWidth="1.5" /></Ic></Cell>
          <Cell name="Object snap options" w="w-[22px]"><Tri w={10} h={6} /></Cell>
        </Group>
        <Group>
          <Cell name="Annotation visibility" on w="w-[31px]"><Ic>{Person}<circle cx="19" cy="5" r="3.5" stroke={W} strokeWidth="1.5" fill="#5585bd" /></Ic></Cell>
          <Cell name="Auto scale"><Ic>{Person}<path d="M19 0l-4 6h3l-2 5 6-7h-3l3-4z" fill={W} /></Ic></Cell>
          <Cell name="Annotation"><Ic>{Person}</Ic></Cell>
          <button className="flex h-[31px] w-11 items-center justify-center gap-[6px] text-[15px]">1:1 <Tri w={10} h={6} /></button>
        </Group>
        <Group>
          <Cell name="Workspace" w="w-[33px]">
            <Ic>
              <circle cx="12" cy="12" r="9.5" stroke={W} strokeWidth="3" strokeDasharray="4 3.46" />
              <circle cx="12" cy="12" r="6" stroke={W} strokeWidth="5" />
            </Ic>
          </Cell>
          <Cell name="Workspace options" w="w-[17px]"><Tri w={10} h={6} /></Cell>
        </Group>
        <Group><Cell name="Annotation monitor" w="w-[31px]"><Ic><path d="M12 0v24M0 12h24" stroke={W} strokeWidth="2.5" /></Ic></Cell></Group>
        <Group><Cell name="Isolate objects" w="w-[31px]"><Ic><rect x="1" y="1" width="9" height="9" stroke={G} strokeWidth="1.5" /><circle cx="18" cy="10" r="4.5" stroke={G} strokeWidth="1.5" /><path d="M10 15l5 8H5z" stroke={G} strokeWidth="1.5" /></Ic></Cell></Group>
        <Group><Cell name="Hardware acceleration" w="w-[29px]"><Ic><path d="M3 1h11l5 5v14H3z" fill="#6eb4e2" /><path d="M8 1v18M3 8h15" stroke="#e8f4fb" strokeWidth="2" /><path d="M2 16l6-1 4 6H2z" fill="#f1d94e" /><path d="M13 15l8 1-3 6-6-2z" fill="#3f8a4a" /></Ic></Cell></Group>
        <Group>
          <Cell name="Clean screen" w="w-[33px]"><Ic><rect x="1" y="4" width="22" height="17" stroke={G} strokeWidth="1.5" /><path d="M4 18v-5l5 5zM20 7v5l-5-5z" fill={W} /><path d="M6 16l3-3M18 9l-3 3" stroke={W} /></Ic></Cell>
          <Cell name="Customization" w="w-[33px]"><Ic><path d="M0 3h24M0 12h24M0 21h24" stroke={W} strokeWidth="2.5" /></Ic></Cell>
        </Group>
      </div>
    </footer>
  );
}

/* ---------- taskbar ---------- */

const apps: [string, ReactNode][] = [
  ["Start", <Ic w={34} h={34}><path d="M0 0h16v16H0zM18 0h16v16H18zM0 18h16v16H0zM18 18h16v16H18z" fill="url(#win)" /><defs><linearGradient id="win" x1="0" y1="0" x2="1" y2="1"><stop stopColor="#35b4f2" /><stop offset="1" stopColor="#0669bd" /></linearGradient></defs></Ic>],
  ["Search", <Ic w={32} h={34}><circle cx="18" cy="14" r="12" stroke="#222" strokeWidth="2.5" fill="#e6e6e6" /><path d="M10 24l-8 8" stroke="#222" strokeWidth="4" /></Ic>],
  ["Task view", <Ic w={36} h={34}><path d="M0 9h26v25H0z" fill="#2a2a2a" /><path d="M9 0h25v25H9z" fill="#f5f5f5" /><path d="M9 9h17v16H9z" fill="#bcbcbc" /></Ic>],
  ["Weather", <Ic w={36} h={34} vb="0 0 42 38"><path d="M8 34a7 7 0 0 1 0-14 11 11 0 0 1 20-3 8 8 0 0 1 2 17z" fill="#b9cdf0" /><path d="M4 28c6 3 20 3 30-1 0 5-3 7-5 7H9c-3 0-5-3-5-6z" fill="#d4e2f8" /></Ic>],
  ["Chat", <Ic w={34} h={34}><path d="M17 1a16 16 0 1 1-8 30l-8 2 2-8A16 16 0 0 1 17 1z" fill="#6560c0" /><rect x="7" y="11" width="14" height="13" rx="2" fill="#fff" /><path d="M23 15l5-3v11l-5-3z" fill="#fff" /></Ic>],
  ["Mail", <Ic w={34} h={34}><path d="M0 12L17 0l17 12v4H0z" fill="#0b4a94" /><path d="M4 11h26v16H4z" fill="#f2f8fc" /><path d="M0 12l17 12 17-12v21H0z" fill="#1f8fe0" /><path d="M17 20l17 13H0z" fill="#35b1f0" /></Ic>],
  ["Edge", <Ic w={34} h={34}><circle cx="17" cy="17" r="17" fill="#0f63b5" /><path d="M1 13C5-1 24-4 32 9c4 9-2 15-9 14-5-1-4-4-3-6 0-8-12-11-19-4z" fill="#2fb48e" /><path d="M1 13C5 0 17-2 24 2c-9 0-16 4-17 12-2-1-4-1-6-1z" fill="#2b9fdc" /><path d="M14 16c-2 8 5 14 17 10-4 7-13 9-19 5-5-5-4-12 2-15z" fill="#1550a0" /><path d="M15 15c4-3 7 1 5 4 0 4 6 5 10 3-3 4-14 5-16-1z" fill="#d8eef5" /></Ic>],
  ["Office", <Ic w={28} h={34}><path d="M17 0l9 4v26l-9 4-14-8 13 2V6L8 9v14l-6 3V8z" fill="#e2451c" /><path d="M17 0l-9 9v14l-6 3V8z" fill="#b12c25" /></Ic>],
  ["WhatsApp", <Ic w={34} h={36}><path d="M17 1a16 16 0 1 1-7 31l-9 3 2-10A16 16 0 0 1 17 1z" fill="#fff" /><path d="M17 4a13 13 0 1 1-7 24l-5 2 2-6A13 13 0 0 1 17 4z" fill="#38a856" /><path d="M11 11c2-3 3-1 5 3l-2 2c1 3 3 4 5 5l2-2c4 2 5 2 3 5-6 5-18-5-13-13z" fill="#fff" /></Ic>],
  ["Recorder", <Ic w={34} h={34}><rect width="34" height="34" rx="5" fill="#1580e0" /><path d="M10 8a11.500 11.500 0 1 1 0 18" stroke="#fff" strokeWidth="2.5" /><path d="M4 11l6 4h13v4H10l-6 4z" fill="#fff" /></Ic>],
];

function Taskbar() {
  return (
    <div className="flex h-[67px] shrink-0 items-center bg-[#dadada] pl-[14px] text-[#2a2a2a]">
      {apps.map(([n, icon]) => (
        <button key={n} aria-label={n} className="relative flex h-14 w-[62px] items-center justify-center">
          {icon}
          {n === "Weather" && <span className="absolute top-[6px] right-[6px] rounded-full bg-[#f5f5f5] px-[3px] text-sm leading-5">16°</span>}
          {n === "Recorder" && <span className="absolute bottom-0 h-1 w-2 rounded bg-[#777]" />}
        </button>
      ))}
      <button aria-label="AutoCAD" className="relative ml-[5px] flex h-[54px] w-[50px] items-center justify-center rounded bg-[#f1efed]">
        <Ic w={26} h={28}>
          <path d="M8 0h9l9 27h-7l-2-6H10l-3 6H0z" fill="#c2302a" />
          <path d="M8 0h5L5 27H0z" fill="#98201c" />
          <path d="M13 9l3 8h-6z" fill="#f1efed" />
        </Ic>
        <span className="absolute bottom-0 h-1 w-[22px] rounded bg-[#1f6db5]" />
      </button>
      <div className="ml-auto flex items-center pr-7">
        <button aria-label="Hidden icons" className="mr-[18px]"><Ic w={18} h={11}><path d="M1 10l8-8 8 8" stroke="#222" strokeWidth="2" /></Ic></button>
        <button aria-label="Touch keyboard" className="mr-[26px]"><Ic w={23} h={16}><rect x="1" y="1" width="21" height="14" rx="2" stroke="#333" strokeWidth="1.5" /><path d="M4 5h15M4 8h15" stroke="#333" strokeWidth="1.5" strokeDasharray="2 2" /><path d="M6 12h11" stroke="#333" strokeWidth="1.5" /></Ic></button>
        <button aria-label="Microphone" className="mr-[26px]"><Ic w={16} h={23}><rect x="5" y="1" width="6" height="14" rx="3" stroke="#3a62a0" strokeWidth="1.5" fill="#a8c4ea" /><path d="M1 10c0 11 14 11 14 0M8 18v5" stroke="#3a62a0" strokeWidth="1.5" /></Ic></button>
        <button aria-label="Network, volume and battery" className="mr-4 flex items-center gap-[11px]">
          <Ic w={24} h={18}><path d="M1 7c7-7 15-7 22 0M4 10c5-5 11-5 16 0M7.500 13c3-3 6-3 9 0" stroke="#333" strokeWidth="1.5" /><circle cx="12" cy="16" r="2" fill="#222" /></Ic>
          <Ic w={23} h={20}><path d="M1 7h4l6-5v16l-6-5H1z" stroke="#333" strokeWidth="1.5" /><path d="M14 7q2 3 0 6M17 4q4 6 0 12M20 2q5 8 0 16" stroke="#444" strokeWidth="1.5" /></Ic>
          <Ic w={23} h={20}><path d="M8 6h12v11H7v-4" stroke="#222" strokeWidth="1.5" /><path d="M9 8h10v8H9zM20 9h3v5h-3zM0 4h8v5H6v6H2V9H0zM1 1h2v4H1zM5 1h2v4H5z" fill="#222" /></Ic>
        </button>
        <button className="text-right text-[15px] leading-[23px]">
          23:36
          <br />
          21.11.2022
        </button>
        <button aria-label="2 notifications" className="ml-3 flex h-[22px] w-[22px] items-center justify-center rounded-full bg-[#0f74cf] text-[15px] leading-5 text-white">
          2
        </button>
      </div>
    </div>
  );
}

export default function App() {
  return (
    <div className="flex h-screen flex-col overflow-hidden bg-[#383838] font-['Noto_Sans',sans-serif]">
      <Header />
      <Ribbon />
      <FileTabs />
      <Canvas />
      <StatusBar />
      <Taskbar />
    </div>
  );
}
